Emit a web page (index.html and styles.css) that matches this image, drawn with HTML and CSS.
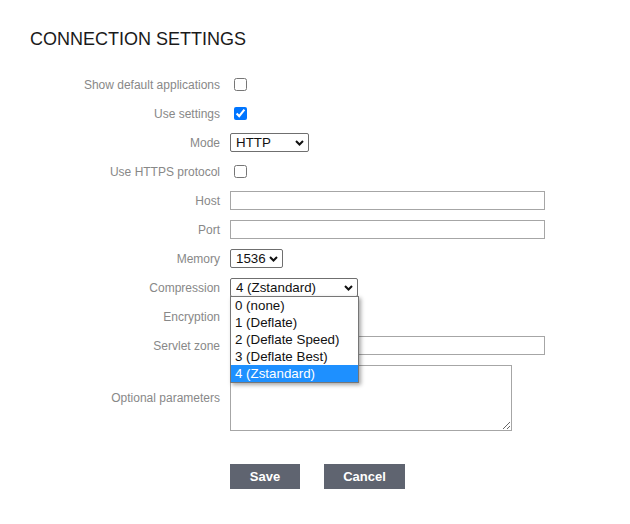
FILE: index.html
```html
<!DOCTYPE html>
<html lang="en">
<head>
<meta charset="utf-8">
<title>Connection settings</title>
<link rel="stylesheet" href="styles.css">
</head>
<body>
<main class="page">
  <h1 class="title">CONNECTION SETTINGS</h1>
  <form class="form">
    <label class="label" for="f-default">Show default applications</label>
    <input class="check" type="checkbox" id="f-default">

    <label class="label" for="f-use">Use settings</label>
    <input class="check" type="checkbox" id="f-use" checked>

    <label class="label" for="f-mode">Mode</label>
    <div class="select-wrap">
      <select class="select select-mode" id="f-mode"><option>HTTP</option><option>HTTPS</option></select>
      <svg class="chev" width="9" height="6" viewBox="0 0 9 6"><path d="M1 1l3.5 3.5L8 1" fill="none" stroke="#111" stroke-width="2"/></svg>
    </div>

    <label class="label" for="f-https">Use HTTPS protocol</label>
    <input class="check" type="checkbox" id="f-https">

    <label class="label" for="f-host">Host</label>
    <input class="text" type="text" id="f-host">

    <label class="label" for="f-port">Port</label>
    <input class="text" type="text" id="f-port">

    <label class="label" for="f-mem">Memory</label>
    <div class="select-wrap">
      <select class="select select-mem" id="f-mem"><option>1536</option></select>
      <svg class="chev" width="9" height="6" viewBox="0 0 9 6"><path d="M1 1l3.5 3.5L8 1" fill="none" stroke="#111" stroke-width="2"/></svg>
    </div>

    <label class="label" for="f-comp">Compression</label>
    <div class="select-wrap">
      <select class="select select-comp" id="f-comp"><option>4 (Zstandard)</option></select>
      <svg class="chev" width="9" height="6" viewBox="0 0 9 6"><path d="M1 1l3.5 3.5L8 1" fill="none" stroke="#111" stroke-width="2"/></svg>
      <ul class="dropdown">
        <li class="opt">0 (none)</li>
        <li class="opt">1 (Deflate)</li>
        <li class="opt">2 (Deflate Speed)</li>
        <li class="opt">3 (Deflate Best)</li>
        <li class="opt opt-active">4 (Zstandard)</li>
      </ul>
    </div>

    <label class="label" for="f-enc">Encryption</label>
    <input class="check" type="checkbox" id="f-enc">

    <label class="label" for="f-zone">Servlet zone</label>
    <input class="text" type="text" id="f-zone">

    <label class="label" for="f-opt">Optional parameters</label>
    <textarea class="area" id="f-opt"></textarea>
  </form>
  <div class="actions">
    <button class="btn btn-save" type="button">Save</button>
    <button class="btn btn-cancel" type="button">Cancel</button>
  </div>
</main>
</body>
</html>
```

FILE: styles.css
```css
html, body {
  margin: 0;
  padding: 0;
  background: #ffffff;
}

body {
  font-family: "Liberation Sans", Arial, sans-serif;
  color: #222;
}

.page {
  padding: 29px 0 0 0;
}

.title {
  margin: 0 0 0 30px;
  font-size: 18px;
  line-height: 20px;
  font-weight: normal;
  color: #1a1a1a;
}

.form {
  margin-top: 26px;
  display: grid;
  grid-template-columns: 220px auto;
  grid-auto-rows: minmax(19px, auto);
  column-gap: 10px;
  row-gap: 10px;
  align-items: center;
  justify-items: start;
}

.label {
  justify-self: end;
  font-size: 12px;
  line-height: 14px;
  color: #888888;
}

.check {
  margin: 0 0 0 4px;
  width: 13px;
  height: 13px;
}

.text {
  box-sizing: border-box;
  width: 315px;
  height: 19px;
  margin: 0;
  padding: 0 3px;
  border: 1px solid #a6a6a6;
  border-radius: 0;
  font: 13.33px "Liberation Sans", Arial, sans-serif;
}

.area {
  box-sizing: border-box;
  width: 282px;
  height: 66px;
  margin: 0;
  padding: 2px 3px;
  border: 1px solid #a6a6a6;
  border-radius: 0;
  font: 13.33px "Liberation Sans", Arial, sans-serif;
}

.select-wrap {
  position: relative;
  display: flex;
}

.select {
  -webkit-appearance: none;
  appearance: none;
  box-sizing: border-box;
  height: 19px;
  margin: 0;
  padding: 0 0 0 5px;
  border: 1px solid #6f6f6f;
  border-radius: 2px;
  background: #fff;
  color: #111;
  font: 13.33px "Liberation Sans", Arial, sans-serif;
  line-height: 17px;
}

.select-mode { width: 79px; }
.select-mem { width: 53px; }
.select-comp { width: 128px; }

.chev {
  position: absolute;
  right: 5px;
  top: 7px;
  pointer-events: none;
}

.dropdown {
  position: absolute;
  left: 0;
  top: 18px;
  box-sizing: border-box;
  width: 129px;
  margin: 0;
  padding: 0;
  list-style: none;
  background: #fff;
  border: 1px solid #767676;
  box-shadow: 2px 2px 4px rgba(0, 0, 0, 0.35);
  z-index: 10;
}

.opt {
  height: 17px;
  line-height: 17px;
  padding-left: 4px;
  font-size: 13.33px;
  color: #111;
  white-space: nowrap;
}

.opt-active {
  background: #1e90ff;
  color: #fff;
}

.actions {
  margin-top: 33px;
  padding-left: 230px;
  display: flex;
  gap: 24px;
}

.btn {
  height: 25px;
  margin: 0;
  padding: 0;
  border: none;
  border-radius: 0;
  background: #5f6470;
  color: #fff;
  font: bold 13px "Liberation Sans", Arial, sans-serif;
}

.btn-save { width: 70px; }
.btn-cancel { width: 81px; }
```
